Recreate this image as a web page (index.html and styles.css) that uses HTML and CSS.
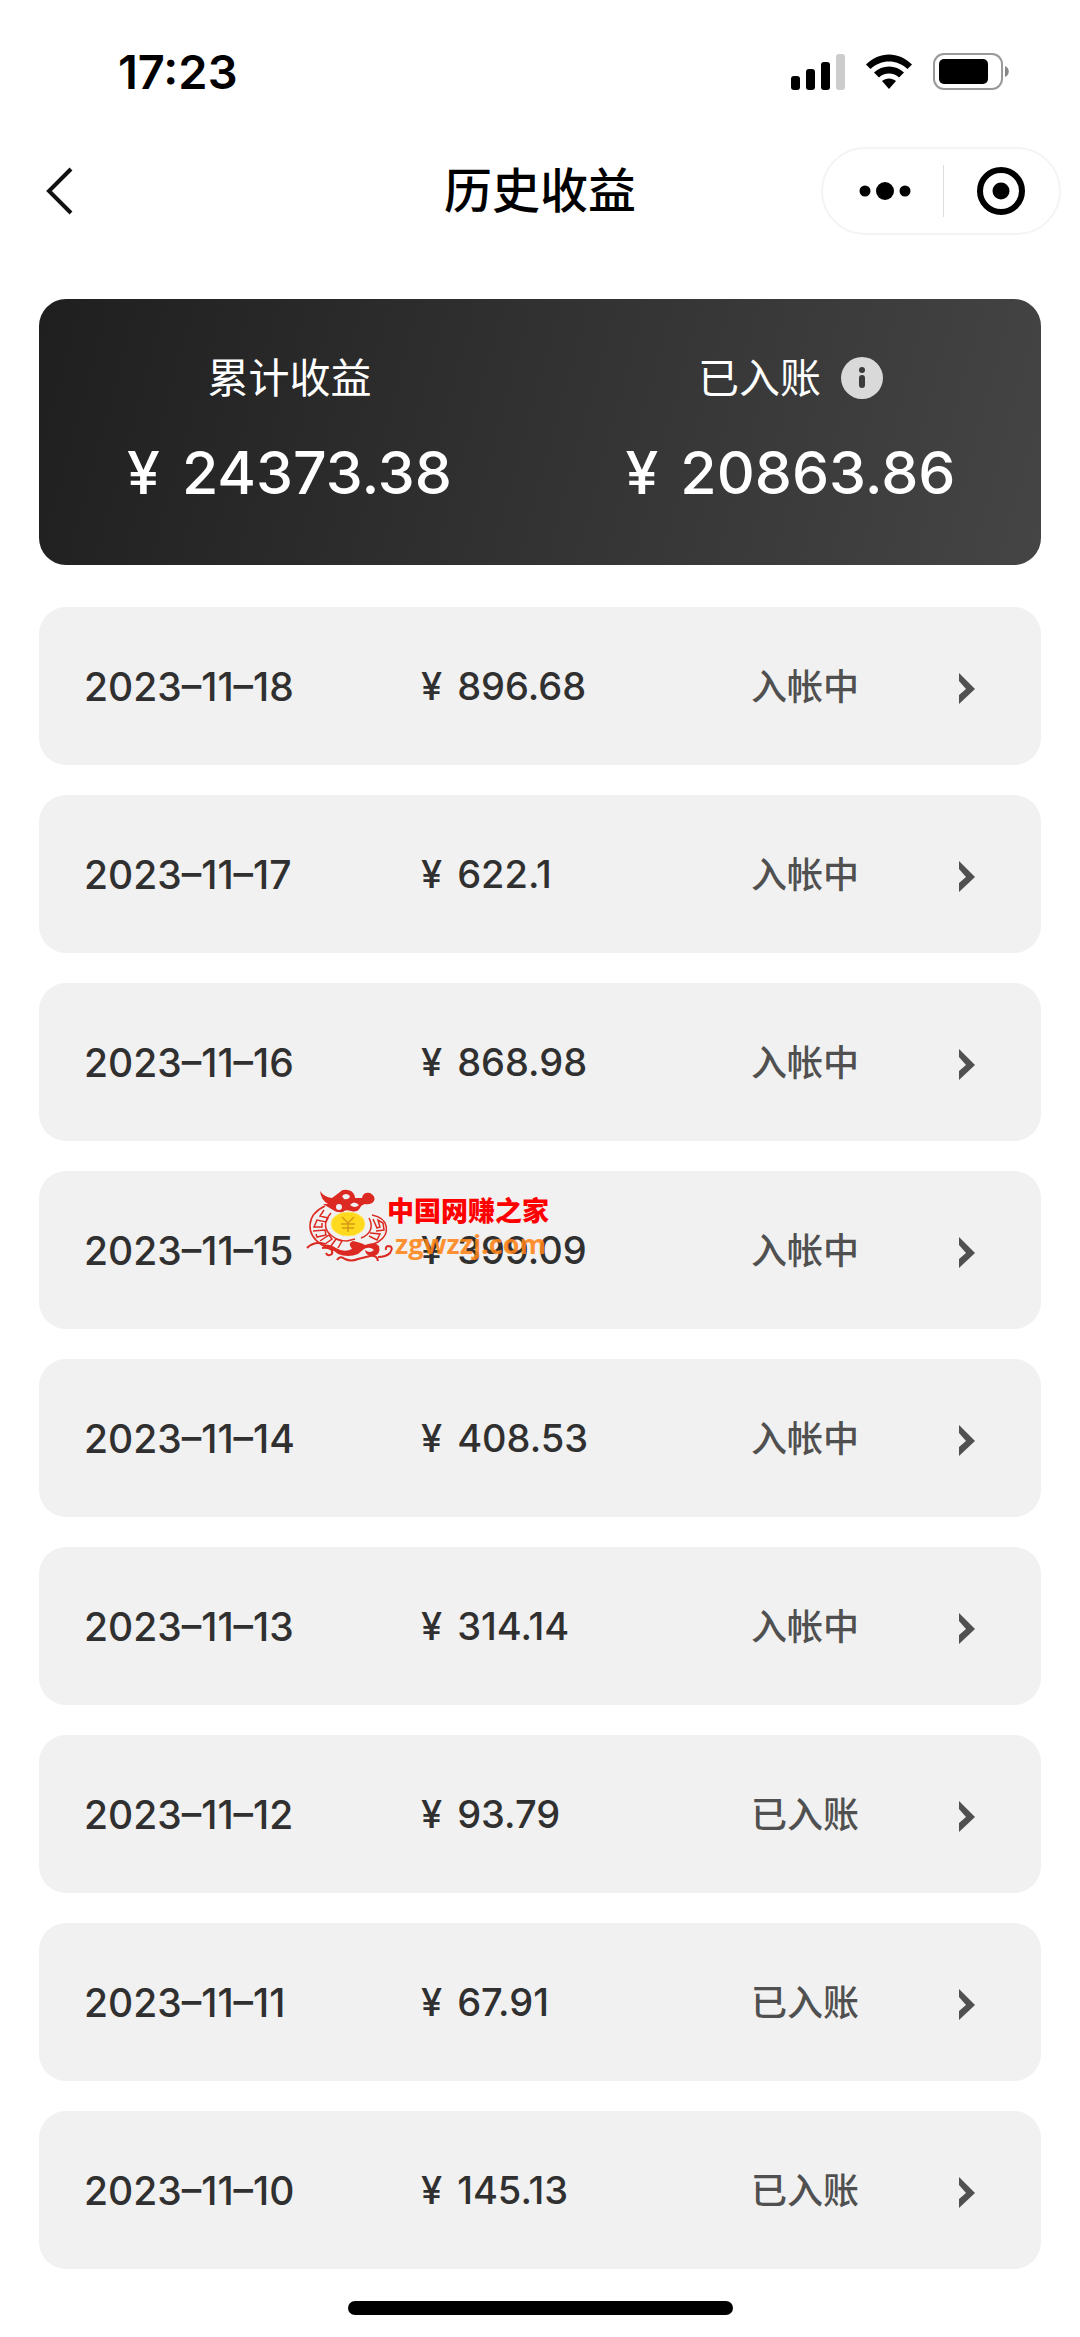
FILE: index.html
```html
<!DOCTYPE html>
<html lang="zh-CN">
<head>
<meta charset="utf-8">
<meta name="viewport" content="width=device-width">
<title>历史收益</title>
<link rel="stylesheet" href="styles.css">
</head>
<body>
<svg width="0" height="0" class="sprite" aria-hidden="true">
  <symbol id="arrow" viewBox="0 0 16 38"><path d="M0 6 16 22 0 37V28L7 22 0 14Z"/></symbol>
</svg>
<header class="status-bar">
  <time class="clock">17:23</time>
  <div class="indicators">
    <svg width="54" height="36" viewBox="0 0 54 36"><rect y="22" width="9" height="14" rx="3"/><rect x="15" y="15" width="9" height="21" rx="3"/><rect x="30" y="8" width="9" height="28" rx="3"/><rect x="45" width="9" height="36" rx="3" fill="#ccc"/></svg>
    <svg width="46" height="36" viewBox="0 0 46 36"><path d="M0 10.500C13-3 33-3 46 10.500L41.500 15C31 5 15 5 4.500 15Z"/><path d="M8 18.500C16 10.500 30 10.500 38 18.500L33 23.500C28 18 18 18 13 23.500Z"/><path d="M16 27C20 23.500 26 23.500 30 27L23 35Z"/></svg>
    <svg width="76" height="38" viewBox="0 0 76 38"><rect x="1" y="1" width="68" height="35" rx="10" fill="none" stroke="#999" stroke-width="2"/><rect x="6" y="6" width="49" height="25" rx="5"/><path d="M72 13c5 2 5 9 0 11Z" fill="#888"/></svg>
  </div>
</header>
<nav class="nav-bar">
  <button class="back" aria-label="返回"><svg width="27" height="48" viewBox="0 0 27 48"><path d="M25 2 3 24l22 22" fill="none" stroke="#111" stroke-width="4"/></svg></button>
  <h1 class="title">历史收益</h1>
  <div class="capsule">
    <button class="capsule-button capsule-more" aria-label="更多"><svg width="52" height="18" viewBox="0 0 52 18"><circle cx="6" cy="9" r="5.500"/><circle cx="26" cy="9" r="9"/><circle cx="46" cy="9" r="5.500"/></svg></button>
    <span class="divider"></span>
    <button class="capsule-button" aria-label="关闭"><svg width="48" height="48" viewBox="0 0 48 48"><circle cx="24" cy="24" r="21" fill="none" stroke="#000" stroke-width="6"/><circle cx="24" cy="24" r="8.500"/></svg></button>
  </div>
</nav>
<main class="content">
  <section class="summary">
    <div class="total"><h2 class="total-label"><span class="label-text">累计收益</span></h2><p class="total-value"><span class="yen">¥</span>24373.38</p></div>
    <div class="total"><h2 class="total-label"><span class="label-text">已入账</span><button class="info" aria-label="说明"><svg width="42" height="42" viewBox="0 0 42 42"><circle cx="21" cy="21" r="21" fill="#d9d9d9"/><circle cx="21" cy="13" r="3" fill="#3a3a3a"/><rect x="18" y="18" width="6" height="13" rx="3" fill="#3a3a3a"/></svg></button></h2><p class="total-value"><span class="yen">¥</span>20863.86</p></div>
  </section>
  <ul class="records">
    <li><a class="record" href="#"><time>2023–11–18</time><span class="amount"><span>¥</span>896.68</span><span class="state">入帐中</span><svg class="arrow"><use href="#arrow"/></svg></a></li>
    <li><a class="record" href="#"><time>2023–11–17</time><span class="amount"><span>¥</span>622.1</span><span class="state">入帐中</span><svg class="arrow"><use href="#arrow"/></svg></a></li>
    <li><a class="record" href="#"><time>2023–11–16</time><span class="amount"><span>¥</span>868.98</span><span class="state">入帐中</span><svg class="arrow"><use href="#arrow"/></svg></a></li>
    <li class="marked"><a class="record" href="#"><time>2023–11–15</time><span class="amount"><span>¥</span>399.09</span><span class="state">入帐中</span><svg class="arrow"><use href="#arrow"/></svg></a>
      <div class="watermark">
        <svg class="dragon" width="90" height="80" viewBox="0 0 90 80" fill="none" stroke="#dc2a22">
          <path d="M20 22C1 31 0 50 17 61Q25 66 34 67M67 31C84 34 86 50 73 58L64 62" stroke-width="1.500"/>
          <path d="M26 29C18 38 19 46 27 52Q33 57 42 57L50 55M64 34C69 43 65 51 56 54" stroke-width="1.500"/>
          <path d="M19 26l-4 6 8 2-2 4-9-2-3 7h8v-4M8 47l12-1 1 5-9 2-1-3M15 57l9-6 3 4-7 5M26 62l5-7 6 2-4 7M68 35l4 9 3-1-2-7 5 3 1 7-8 1M65 49l10 1-3 6-8-4" stroke-width="1.500"/>
          <path fill="#dc2a22" stroke="none" d="M15 7Q19 13 27 14L35 8Q38 4 46 7 50 10 50 14L57 14Q58 8 65 9 71 12 69 17 66 21 60 20 56 21 55 24 52 29 46 27 40 25 38 28 32 29 28 26L18 20 23 20Q16 16 15 7Z"/>
          <path fill="#f1f1f1" stroke="none" d="M37 12q4-4 8 0-1 4-6 3ZM45 21q4-5 9 0-4 4-9 0Z"/><circle cx="34" cy="23" r="3" fill="#f1f1f1" stroke="none"/>
          <ellipse cx="43" cy="40" rx="17" ry="12" fill="#ffd91e" stroke="#ffe76a"/>
          <path d="m37 33 6 6 6-6M36 40h14M37 44h12M43 39v9" stroke="#d79a14" stroke-width="1.500"/>
          <path fill="#dc2a22" stroke="none" d="M16 61Q24 59 31 64 39 69 47 65 42 59 48 57 57 59 60 61 70 57 74 62 76 70 69 72 61 73 60 66 65 70 69 66 65 62 59 65L53 70Q43 74 33 70 25 63 16 61Z"/>
          <path d="M2 64Q9 57 20 60M17 64q12-1 10 6-4 3-6-1M32 76q3-5 8-1 6 3 13 0l12-3q7-1 8 5M73 73q8 0 12-4 4-6-1-7-4 0-3 4" stroke-width="2"/>
        </svg>
        <div class="site"><strong class="site-name">中国网赚之家</strong><span class="site-url">zgwzzj.com</span></div>
      </div>
    </li>
    <li><a class="record" href="#"><time>2023–11–14</time><span class="amount"><span>¥</span>408.53</span><span class="state">入帐中</span><svg class="arrow"><use href="#arrow"/></svg></a></li>
    <li><a class="record" href="#"><time>2023–11–13</time><span class="amount"><span>¥</span>314.14</span><span class="state">入帐中</span><svg class="arrow"><use href="#arrow"/></svg></a></li>
    <li><a class="record" href="#"><time>2023–11–12</time><span class="amount"><span>¥</span>93.79</span><span class="state">已入账</span><svg class="arrow"><use href="#arrow"/></svg></a></li>
    <li><a class="record" href="#"><time>2023–11–11</time><span class="amount"><span>¥</span>67.91</span><span class="state">已入账</span><svg class="arrow"><use href="#arrow"/></svg></a></li>
    <li><a class="record" href="#"><time>2023–11–10</time><span class="amount"><span>¥</span>145.13</span><span class="state">已入账</span><svg class="arrow"><use href="#arrow"/></svg></a></li>
  </ul>
</main>
<div class="home-indicator"></div>
</body>
</html>
```
FILE: styles.css
```css
* { box-sizing: border-box; margin: 0; padding: 0; }
body { background: #fff; color: #000; font-family: Inter, "Noto Sans CJK SC", sans-serif; }
button { border: 0; background: none; cursor: pointer; }
svg { display: block; }
.sprite { position: absolute; }

.status-bar { display: flex; justify-content: space-between; align-items: center; height: 143px; padding: 0 71px 0 118px; }
.clock { font-size: 47px; font-weight: 600; }
.indicators { display: flex; align-items: center; gap: 21px; }

.nav-bar { display: grid; grid-template-columns: 1fr auto 1fr; align-items: center; height: 96px; padding: 0 19px; }
.back { justify-self: start; padding-left: 27px; }
.title { font-size: 48px; line-height: 60px; font-weight: 500; }
.capsule { display: flex; align-items: center; justify-self: end; width: 240px; height: 88px; border: 2px solid #f4f4f4; border-radius: 44px; }
.capsule-button { display: grid; place-items: center; flex: 1; height: 100%; }
.capsule-more { padding-left: 4px; }
.divider { width: 1px; height: 52px; background: #ddd; }

.content { padding: 60px 39px 0; }
.summary { display: grid; grid-template-columns: 1fr 1fr; padding: 50px 0 52px; border-radius: 27px; background: linear-gradient(105deg, #1f1f1f, #454545); color: #fff; text-align: center; }
.total-label { display: flex; justify-content: center; align-items: center; gap: 20px; height: 58px; font-size: 41px; font-weight: 400; }
.label-text { padding-bottom: 6px; }
.total-value { margin-top: 26px; font-size: 59px; line-height: 80px; font-weight: 500; }
.yen { margin-right: 22px; }

.records { display: grid; gap: 30px; margin-top: 42px; list-style: none; }
.record { display: grid; grid-template-columns: 337px 330px 1fr 16px; align-items: center; height: 158px; padding: 0 66px 0 45px; border-radius: 27px; background: #f1f1f1; color: #303030; font-size: 39px; font-weight: 500; text-decoration: none; }
.amount { display: flex; gap: 15px; font-size: 38px; }
.state { padding-bottom: 4px; color: #505050; font-size: 36px; }
.arrow { width: 16px; height: 38px; fill: #505050; }

.marked { position: relative; }
.watermark { position: absolute; top: 13px; left: 266px; display: flex; pointer-events: none; }
.site { display: grid; grid-template-rows: 46px 36px; margin-left: -8px; }
.site-name { color: #f00; font-size: 27px; line-height: 56px; font-weight: 900; }
.site-url { padding-left: 8px; color: rgba(255, 132, 22, 0.88); font-family: "Open Sans", sans-serif; font-size: 27px; line-height: 28px; font-weight: 700; }

.home-indicator { width: 385px; height: 14px; margin: 32px auto 22px; border-radius: 7px; background: #000; }
```
